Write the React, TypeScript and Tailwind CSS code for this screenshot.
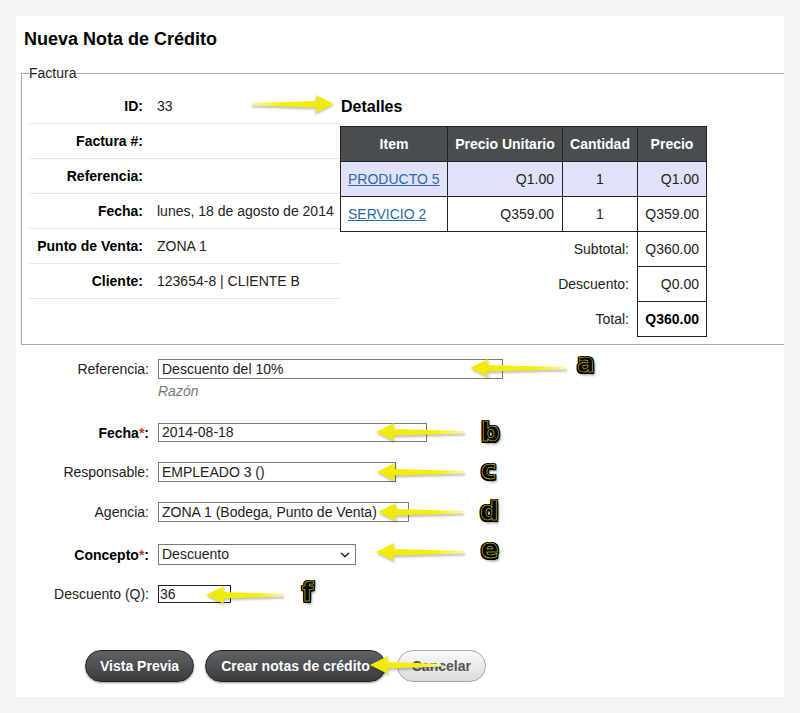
import {ChevronDown} from "lucide-react";

type ArrowProps = {
	left: number;
	top: number;
	width: number;
	right?: boolean;
}

// flecha amarilla de anotación (encima del contenido)
function Arrow({left, top, width, right = false}: ArrowProps) {
	const w = width;
	const pts = `0,9 18,0 17,6 ${w},8 ${w},10.5 17,12.5 18,18`;
	return (
		<svg
			className="absolute drop-shadow-[1px_2px_1px_rgba(0,0,0,0.25)]"
			style={{left, top, transform: right ? "scaleX(-1)" : undefined}}
			width={w}
			height={18}
			viewBox={`0 0 ${w} 18`}
		>
			<defs>
				<linearGradient id={`g${left}${top}`} x1="0" x2="1" y1="0" y2="0">
					<stop offset="0" stopColor="#f2ea00"/>
					<stop offset="0.7" stopColor="#f6ee10"/>
					<stop offset="1" stopColor="#fbf7a0"/>
				</linearGradient>
			</defs>
			<polygon points={pts} fill={`url(#g${left}${top})`}/>
		</svg>
	);
}

function Letter({left, top, children}: {left: number; top: number; children: string}) {
	return (
		<span
			className="absolute font-['DejaVu_Sans',sans-serif] font-bold text-[26px] leading-[28px] text-black [-webkit-text-stroke:0.5px_#f4ec00] [text-shadow:1.5px_1.5px_0_#000,-1.5px_-1.5px_0_#000,1.5px_-1.5px_0_#000,-1.5px_1.5px_0_#000,0_1.5px_0_#000,0_-1.5px_0_#000,1.5px_0_0_#000,-1.5px_0_0_#000,2px_3px_3px_rgba(0,0,0,0.5)]"
			style={{left, top}}
		>
			{children}
		</span>
	);
}

const facturaRows = [
	{label: "ID:", value: "33"},
	{label: "Factura #:", value: ""},
	{label: "Referencia:", value: ""},
	{label: "Fecha:", value: "lunes, 18 de agosto de 2014"},
	{label: "Punto de Venta:", value: "ZONA 1"},
	{label: "Cliente:", value: "123654-8 | CLIENTE B"},
];

export default function App() {
	return (
		<div className="relative min-h-[713px] bg-[#f4f4f4] p-[16px] font-['Liberation_Sans',Arial,sans-serif] text-[#222]">
			<div className="bg-white h-[681px] w-[768px] pl-[5px] pt-[11px]">
				<h1 className="pl-[3px] text-[18px] leading-[24px] font-bold text-black">Nueva Nota de Crédito</h1>

				<fieldset className="mt-[14px] border border-r-0 border-[#a9a9a9] pl-[7px] pt-[8px] pb-[7px]">
					<legend className="text-[14px] leading-[16px] px-0">Factura</legend>
					<div className="flex">
						<div className="w-[311px]">
							{facturaRows.map((row) => (
								<div key={row.label} className="flex items-center h-[35px] border-b border-[#e6e6e6]">
									<span className="w-[121px] pr-[7px] text-right text-[14px] font-bold text-black whitespace-nowrap">{row.label}</span>
									<span className="pl-[7px] text-[14px]">{row.value}</span>
								</div>
							))}
						</div>
						<div>
							<h2 className="mt-[8px] pl-[1px] text-[16px] leading-[20px] font-bold text-black">Detalles</h2>
							<table className="mt-[9px] border-collapse text-[14px]">
								<thead>
									<tr className="bg-[#4a4d50] text-white text-[14px] font-bold">
										<th className="border border-[#222] h-[35px] w-[107px]">Item</th>
										<th className="border border-[#222] h-[35px] w-[115px] whitespace-nowrap">Precio Unitario</th>
										<th className="border border-[#222] h-[35px] w-[75px]">Cantidad</th>
										<th className="border border-[#222] h-[35px] w-[69px]">Precio</th>
									</tr>
								</thead>
								<tbody>
									<tr className="bg-[#e1e1f9]">
										<td className="border border-[#222] h-[35px] pl-[7px]"><a className="text-[#2a6aa6] underline">PRODUCTO 5</a></td>
										<td className="border border-[#222] h-[35px] pr-[8px] text-right">Q1.00</td>
										<td className="border border-[#222] h-[35px] text-center">1</td>
										<td className="border border-[#222] h-[35px] pr-[7px] text-right">Q1.00</td>
									</tr>
									<tr>
										<td className="border border-[#222] h-[35px] pl-[7px]"><a className="text-[#2a6aa6] underline">SERVICIO 2</a></td>
										<td className="border border-[#222] h-[35px] pr-[8px] text-right">Q359.00</td>
										<td className="border border-[#222] h-[35px] text-center">1</td>
										<td className="border border-[#222] h-[35px] pr-[7px] text-right">Q359.00</td>
									</tr>
									<tr>
										<td colSpan={3} className="h-[35px] pr-[8px] text-right">Subtotal:</td>
										<td className="border border-[#222] h-[35px] pr-[7px] text-right">Q360.00</td>
									</tr>
									<tr>
										<td colSpan={3} className="h-[35px] pr-[8px] text-right">Descuento:</td>
										<td className="border border-[#222] h-[35px] pr-[7px] text-right">Q0.00</td>
									</tr>
									<tr>
										<td colSpan={3} className="h-[35px] pr-[8px] text-right">Total:</td>
										<td className="border border-[#222] h-[35px] pr-[7px] text-right font-bold text-black">Q360.00</td>
									</tr>
								</tbody>
							</table>
						</div>
					</div>
				</fieldset>

				<div className="text-[14px]">
					<div className="flex items-center mt-[14px]">
						<label className="w-[128px] text-right leading-[16px]">Referencia:</label>
						<div className="ml-[9px] w-[345px] h-[20px] border border-[#7a7a7a] pl-[3px] leading-[18px]">Descuento del 10%</div>
					</div>
					<div className="ml-[137px] mt-[4px] leading-[16px] italic text-[#777]">Razón</div>

					<div className="flex items-center mt-[24px]">
						<label className="w-[128px] text-right leading-[16px] font-bold text-black">Fecha<span className="text-[#c0392b]">*</span>:</label>
						<div className="ml-[9px] w-[269px] h-[19px] border border-[#7a7a7a] pl-[3px] leading-[17px]">2014-08-18</div>
					</div>

					<div className="flex items-center mt-[20px]">
						<label className="w-[128px] text-right leading-[16px]">Responsable:</label>
						<div className="relative ml-[9px] w-[238px] h-[20px] border border-[#7a7a7a] pl-[3px] leading-[18px]">
							EMPLEADO 3 ()
							<ChevronDown className="absolute right-[4px] top-[3px]" size={12} strokeWidth={3}/>
						</div>
					</div>

					<div className="flex items-center mt-[20px]">
						<label className="w-[128px] text-right leading-[16px]">Agencia:</label>
						<div className="ml-[9px] w-[251px] h-[20px] border border-[#7a7a7a] pl-[3px] leading-[18px] whitespace-nowrap overflow-hidden">ZONA 1 (Bodega, Punto de Venta)</div>
					</div>

					<div className="flex items-center mt-[22px]">
						<label className="w-[128px] text-right leading-[16px] font-bold text-black">Concepto<span className="text-[#c0392b]">*</span>:</label>
						<div className="relative ml-[9px] w-[198px] h-[21px] border border-[#7a7a7a] pl-[3px] leading-[19px]">
							Descuento
							<ChevronDown className="absolute right-[3px] top-[3px]" size={14} strokeWidth={2.5}/>
						</div>
					</div>

					<div className="flex items-center mt-[20px]">
						<label className="w-[128px] text-right leading-[16px]">Descuento (Q):</label>
						<div className="ml-[9px] w-[73px] h-[18px] border border-[#222] pl-[1px] leading-[16px]">36</div>
					</div>

					<div className="flex gap-[11px] pl-[64px] mt-[47px]">
						<button className="h-[32px] px-[14px] rounded-full border border-[#222] bg-gradient-to-b from-[#5f6366] to-[#3a3d40] text-white font-bold text-[14px] shadow-[0_1px_2px_rgba(0,0,0,0.4)]">Vista Previa</button>
						<button className="h-[32px] px-[15px] rounded-full border border-[#222] bg-gradient-to-b from-[#5f6366] to-[#3a3d40] text-white font-bold text-[14px] shadow-[0_1px_2px_rgba(0,0,0,0.4)]">Crear notas de crédito</button>
						<button className="h-[32px] px-[14px] rounded-full border border-[#a9a9a9] bg-gradient-to-b from-[#fafafa] to-[#dcdcdc] text-[#555] font-bold text-[14px]">Cancelar</button>
					</div>
				</div>
			</div>

			<Arrow left={253} top={95} width={81} right/>
			<Arrow left={470} top={359} width={96}/>
			<Arrow left={376} top={423} width={88}/>
			<Arrow left={377} top={463} width={87}/>
			<Arrow left={378} top={503} width={85}/>
			<Arrow left={376} top={543} width={88}/>
			<Arrow left={206} top={586} width={77}/>
			<Arrow left={370} top={656} width={71}/>

			<Letter left={577} top={349}>a</Letter>
			<Letter left={481} top={418}>b</Letter>
			<Letter left={481} top={456}>c</Letter>
			<Letter left={480} top={497}>d</Letter>
			<Letter left={481} top={535}>e</Letter>
			<Letter left={302} top={578}>f</Letter>
		</div>
	);
}
